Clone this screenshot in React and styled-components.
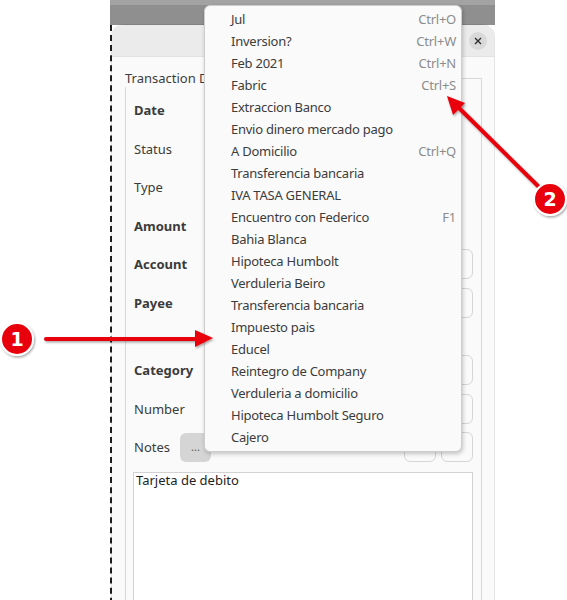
import styled, { createGlobalStyle } from "styled-components";

const GlobalStyle = createGlobalStyle`
  html, body {
    margin: 0;
    padding: 0;
    background: #ffffff;
  }
  body {
    font-family: "Noto Sans", "DejaVu Sans", sans-serif;
    font-size: 13px;
    color: #3d3d3d;
  }
`;

const menuItems = [
  { label: "Jul", shortcut: "Ctrl+O" },
  { label: "Inversion?", shortcut: "Ctrl+W" },
  { label: "Feb 2021", shortcut: "Ctrl+N" },
  { label: "Fabric", shortcut: "Ctrl+S" },
  { label: "Extraccion Banco" },
  { label: "Envio dinero mercado pago" },
  { label: "A Domicilio", shortcut: "Ctrl+Q" },
  { label: "Transferencia bancaria" },
  { label: "IVA TASA GENERAL" },
  { label: "Encuentro con Federico", shortcut: "F1" },
  { label: "Bahia Blanca" },
  { label: "Hipoteca Humbolt" },
  { label: "Verduleria Beiro" },
  { label: "Transferencia bancaria" },
  { label: "Impuesto pais" },
  { label: "Educel" },
  { label: "Reintegro de Company" },
  { label: "Verduleria a domicilio" },
  { label: "Hipoteca Humbolt Seguro" },
  { label: "Cajero" },
];

const rows = [
  { label: "Date", bold: true, field: 200 },
  { label: "Status", field: 160 },
  { label: "Type", field: 160 },
  { label: "Amount", bold: true, field: 200 },
  { label: "Account", bold: true },
  { label: "Payee", bold: true },
  { spacer: true },
  { label: "Category", bold: true },
  { label: "Number" },
];

const App = () => {
  return (
    <>
      <GlobalStyle />
      <Page>
        <Backdrop>
          <TopStrip />
          <Stage>
            <Window>
              <Header>
                <CloseButton>
                  <svg width="8" height="8" viewBox="0 0 8 8">
                    <path d="M1 1 L7 7 M7 1 L1 7" stroke="#2e2e2e" strokeWidth="1.4" />
                  </svg>
                </CloseButton>
              </Header>
              <Body>
                <Frame>
                  <Legend>Transaction Details</Legend>
                  <Rows>
                    {rows.map((r, i) =>
                      r.spacer ? (
                        <Spacer key={i} />
                      ) : (
                        <Row key={i}>
                          <Label $bold={r.bold}>{r.label}</Label>
                          <Field $width={r.field} />
                        </Row>
                      )
                    )}
                    <NotesRow>
                      <Label>Notes</Label>
                      <DotsButton>...</DotsButton>
                      <Grow />
                      <SmallButton />
                      <SmallButton />
                    </NotesRow>
                  </Rows>
                  <NotesArea>Tarjeta de debito</NotesArea>
                </Frame>
              </Body>
            </Window>
          </Stage>
        </Backdrop>

        <Menu>
          {menuItems.map((item, i) => (
            <MenuItem key={i}>
              <span>{item.label}</span>
              {item.shortcut && <Shortcut>{item.shortcut}</Shortcut>}
            </MenuItem>
          ))}
        </Menu>

        <Annotations width="567" height="600" viewBox="0 0 567 600">
          <defs>
            <filter id="shadow" x="-20%" y="-20%" width="140%" height="140%">
              <feDropShadow dx="1" dy="1.5" stdDeviation="1.2" floodColor="#000" floodOpacity="0.35" />
            </filter>
          </defs>
          <g filter="url(#shadow)">
            <line x1="46" y1="339" x2="198" y2="339" stroke="#e8000b" strokeWidth="4" strokeLinecap="round" />
            <polygon points="213,338 195,330 195,347" fill="#e8000b" />
            <line x1="538" y1="186" x2="458" y2="107" stroke="#e8000b" strokeWidth="4" strokeLinecap="round" />
            <polygon points="447,96 453,115 465,103" fill="#e8000b" />
            <circle cx="17" cy="339" r="16" fill="#e8000b" stroke="#fff" strokeWidth="2" />
            <circle cx="550" cy="199" r="16" fill="#e8000b" stroke="#fff" strokeWidth="2" />
          </g>
          <Badge x="17" y="346">1</Badge>
          <Badge x="550" y="206">2</Badge>
        </Annotations>
      </Page>
    </>
  );
};

const Page = styled.div`
  position: relative;
  width: 567px;
  height: 600px;
  overflow: hidden;
  display: flex;
`;

const Backdrop = styled.div`
  margin-left: 110px;
  width: 385px;
  display: flex;
  flex-direction: column;
`;

const TopStrip = styled.div`
  height: 25px;
  flex-shrink: 0;
  background: linear-gradient(#a3a3a3 0 5px, #8f8f8f 5px);
`;

const Stage = styled.div`
  flex: 1;
  display: flex;
  border-left: 2px dashed #1e1e1e;
`;

const Window = styled.div`
  flex: 1;
  display: flex;
  flex-direction: column;
  border-radius: 12px 12px 0 0;
  background: #fafafa;
  box-shadow: 0 0 0 1px rgba(0, 0, 0, 0.1);
  margin-right: 1px;
`;

const Header = styled.div`
  height: 32px;
  flex-shrink: 0;
  display: flex;
  align-items: center;
  justify-content: flex-end;
  padding-right: 7px;
  background: #ebebeb;
  border-radius: 12px 12px 0 0;
  border-bottom: 1px solid #e2e2e2;
  box-sizing: border-box;
`;

const CloseButton = styled.div`
  width: 18px;
  height: 18px;
  border-radius: 50%;
  background: #d9d9d9;
  display: flex;
  align-items: center;
  justify-content: center;
`;

const Body = styled.div`
  flex: 1;
  padding: 12px 12px 0 13px;
  display: flex;
  flex-direction: column;
`;

const Frame = styled.fieldset`
  flex: 1;
  margin: 0;
  padding: 8px 8px 0 8px;
  border: 1px solid #d8d8d8;
  border-bottom: none;
  min-width: 0;
`;

const Legend = styled.legend`
  padding: 0;
  margin-left: -9px;
  line-height: 18px;
  white-space: nowrap;
  color: #3d3d3d;
`;

const Rows = styled.div`
  display: flex;
  flex-direction: column;
  gap: 8.6px;
`;

const Row = styled.div`
  height: 30px;
  display: flex;
  align-items: center;
  gap: 8px;
`;

const Spacer = styled.div`
  height: 20px;
`;

const Label = styled.div`
  width: 66px;
  flex-shrink: 0;
  font-weight: ${(p) => (p.$bold ? 700 : 400)};
  color: #3b3b3b;
`;

const Field = styled.div`
  height: 30px;
  box-sizing: border-box;
  ${(p) => (p.$width ? `width: ${p.$width}px;` : "flex: 1;")}
  border: 1px solid #d6d6d6;
  border-radius: 6px;
  background: #fafafa;
`;

const NotesRow = styled.div`
  height: 30px;
  display: flex;
  align-items: center;
  gap: 5px;
  & > ${Label} {
    width: auto;
    margin-right: 5px;
  }
`;

const DotsButton = styled.div`
  width: 31px;
  height: 29px;
  border-radius: 6px;
  background: #d5d5d5;
  color: #555;
  display: flex;
  align-items: center;
  justify-content: center;
  font-size: 11px;
  padding-bottom: 2px;
  box-sizing: border-box;
`;

const Grow = styled.div`
  flex: 1;
`;

const SmallButton = styled.div`
  width: 32px;
  height: 30px;
  box-sizing: border-box;
  border: 1px solid #d6d6d6;
  border-radius: 6px;
  background: #fafafa;
`;

const NotesArea = styled.div`
  margin-top: 10px;
  height: 200px;
  margin-left: -1px;
  border: 1px solid #d2d2d2;
  background: #ffffff;
  padding: 0 2px;
  line-height: 14px;
  color: #1e1e1e;
`;

const Menu = styled.div`
  position: absolute;
  left: 204px;
  top: 5px;
  width: 258px;
  box-sizing: border-box;
  padding: 2px 0 3px;
  background: #fafafa;
  border: 1px solid #cdcdcd;
  border-radius: 6px;
  box-shadow: 1px 2px 4px rgba(0, 0, 0, 0.22);
`;

const MenuItem = styled.div`
  height: 22px;
  display: flex;
  align-items: center;
  justify-content: space-between;
  padding: 0 5px 0 26px;
  color: #3c3c3c;
  letter-spacing: -0.25px;
  white-space: nowrap;
`;

const Shortcut = styled.span`
  color: #8c8c8c;
`;

const Annotations = styled.svg`
  position: absolute;
  left: 0;
  top: 0;
  pointer-events: none;
`;

const Badge = styled.text`
  fill: #ffffff;
  font-family: "DejaVu Sans", sans-serif;
  font-weight: 700;
  font-size: 19px;
  text-anchor: middle;
`;

export default App;
